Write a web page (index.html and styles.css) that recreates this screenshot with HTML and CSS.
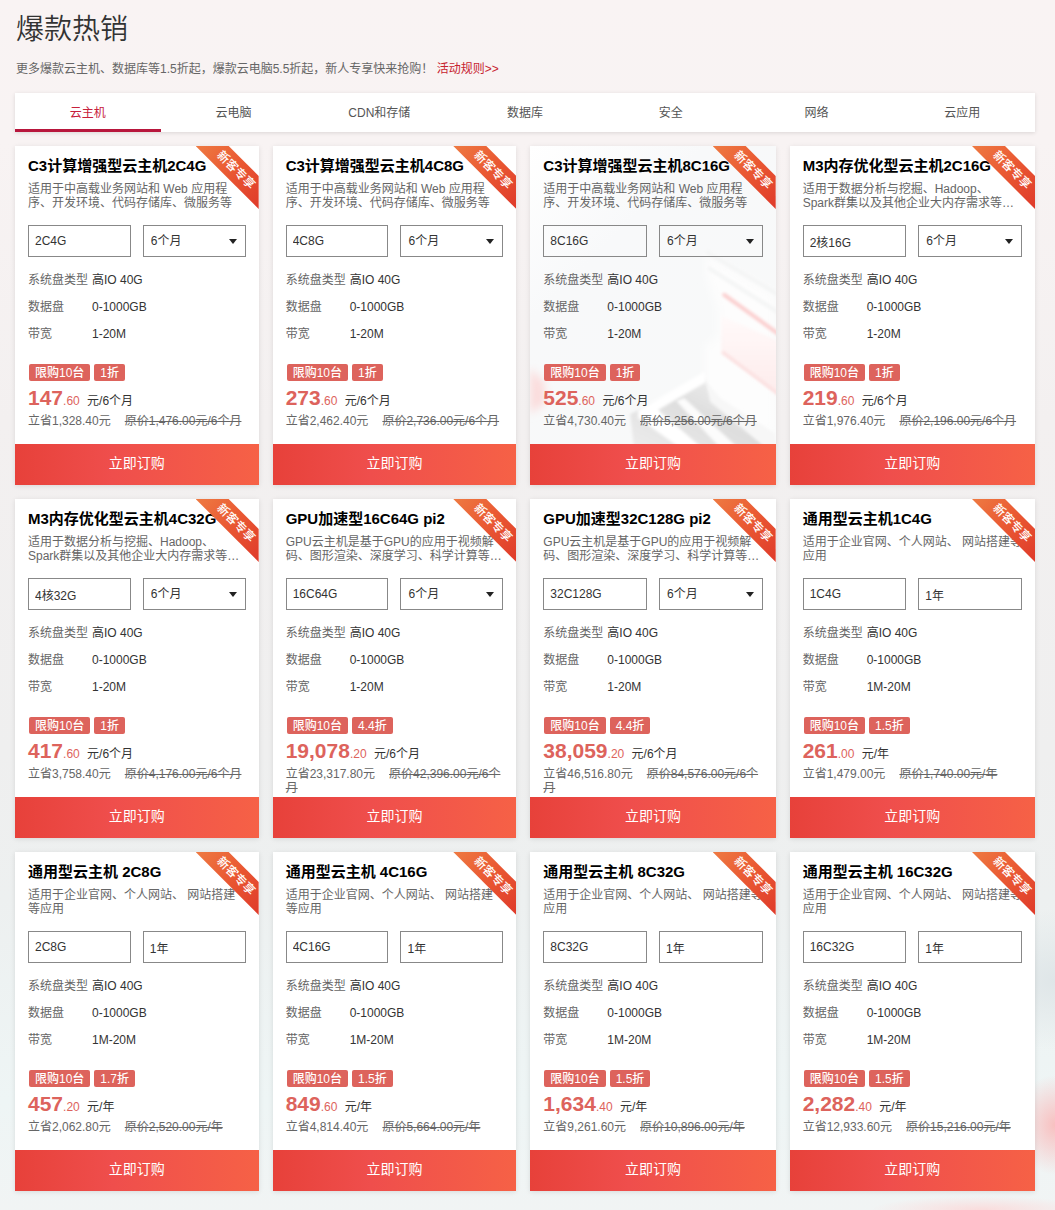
FILE: index.html
```
<!DOCTYPE html>
<html lang="zh-CN">
<head>
  <meta charset="UTF-8" />
  <title>爆款热销</title>
  <link rel="stylesheet" href="styles.css">
</head>
<body>
  <header class="page-head">
    <h1>爆款热销</h1>
    <p>更多爆款云主机、数据库等1.5折起，爆款云电脑5.5折起，新人专享快来抢购！ <a href="#rules">活动规则&gt;&gt;</a></p>
  </header>

  <nav class="tabs">
    <button class="tab active">云主机</button>
    <button class="tab">云电脑</button>
    <button class="tab">CDN和存储</button>
    <button class="tab">数据库</button>
    <button class="tab">安全</button>
    <button class="tab">网络</button>
    <button class="tab">云应用</button>
  </nav>

  <main class="cards" id="cards"></main>

  <script src="app.js"></script>
</body>
</html>
```

FILE: styles.css
```
* { box-sizing: border-box; }

body {
  margin: 0;
  padding: 9px 20px 19px 15px;
  font-family: "Liberation Sans", "Noto Sans CJK SC", sans-serif;
  font-size: 12px;
  color: #333;
  background:
    radial-gradient(ellipse 40px 50px at 100% 1125px, #f8c0c0, transparent),
    radial-gradient(ellipse 110px 14px at 93% 100%, #fadcdc, transparent),
    radial-gradient(ellipse 90px 70px at 100% 980px, #dfe6e8, transparent),
    linear-gradient(#f9f3f3 0, #f8f3f3 140px, #f3f0f0 420px, #efefef 750px, #edf0f0 900px, #eef5f5 1100px, #f1f4f4 100%);
}

button, input, select {
  font-family: inherit;
  font-size: 12px;
  color: #333;
}

.page-head {
  padding-left: 1px;
}

h1 {
  margin: 0;
  font-size: 28px;
  font-weight: 350;
  line-height: 42px;
}

.page-head p {
  margin: 8px 0 14px;
  line-height: 20px;
  color: #666;
}

.page-head a {
  color: #c7222f;
  text-decoration: none;
}

.tabs {
  display: flex;
  margin-bottom: 14px;
  background: #fff;
  box-shadow: 0 1px 4px rgba(0,0,0,0.12);
}

.tab {
  flex: 1;
  height: 39px;
  padding: 1px 0 0;
  border: none;
  border-bottom: 3px solid transparent;
  background: none;
  color: #555;
  cursor: pointer;
}

.tab.active {
  color: #c7203c;
  border-bottom-color: #b8163c;
}

.cards {
  display: grid;
  grid-template-columns: repeat(4, 1fr);
  gap: 14px;
}

.card {
  position: relative;
  background: #fff;
  box-shadow: 0 1px 5px rgba(0,0,0,0.1);
}

.card.hover {
  background: linear-gradient(135deg, #fff, #f8f9fa 30%, #f8f9f9 80%, #fafbfb);
}

.card-art {
  position: absolute;
  top: 0;
  left: 0;
  width: 100%;
  height: 298px;
}

.card-body {
  position: relative;
  padding: 9px 13px 2px;
}

.card h3 {
  margin: 0;
  font-size: 15px;
  line-height: 22px;
  color: #000;
  white-space: nowrap;
}

.desc {
  margin: 5px 0 15px;
  line-height: 14px;
  color: #666;
  white-space: pre;
}

.options {
  display: grid;
  grid-template-columns: 1fr 1fr;
  gap: 12px;
}

.options input, .options select {
  width: 100%;
  height: 32px;
  padding: 0 6px;
  border: 1px solid #888;
  border-radius: 0;
  background: transparent;
  line-height: 30px;
  appearance: none;
}

.options select {
  padding-left: 7px;
}

.select {
  position: relative;
}

.select::after {
  content: "";
  position: absolute;
  top: 14px;
  right: 9px;
  border: 4px solid transparent;
  border-top: 5px solid #222;
  border-bottom: none;
  pointer-events: none;
}

.specs {
  display: grid;
  grid-template-columns: 60px 1fr;
  column-gap: 4px;
  margin: 10px 0 16px;
  line-height: 27px;
}

.specs dt {
  color: #666;
}

.specs dd {
  margin: 0;
}

.tags {
  display: flex;
  gap: 4px;
  padding-left: 1px;
}

.tag {
  padding: 1px 6px 0;
  border-radius: 2px;
  background: #dd635c;
  color: #fff;
  font-weight: 500;
  line-height: 16px;
}

.price {
  margin: 5px 0 1px;
  line-height: 24px;
}

.price b {
  font-size: 21px;
}

.price b, .price small {
  color: #dd635c;
}

.price small {
  font-size: 12px;
  margin-right: 4px;
}

.saving {
  min-height: 28px;
  margin: 0;
  line-height: 14px;
  color: #666;
}

.saving del {
  margin-left: 14px;
}

.buy {
  display: block;
  position: relative;
  width: 100%;
  height: 41px;
  padding: 0 0 5px;
  border: none;
  background: linear-gradient(90deg, #e7413a, #ef4e4c 40%, #f66146);
  color: #fff;
  font-size: 14px;
  cursor: pointer;
}

.ribbon {
  position: absolute;
  top: 0;
  right: 0;
  width: 63px;
  height: 63px;
  clip-path: polygon(0 0, 33px 0, 100% 30px, 100% 100%);
  background: linear-gradient(135deg, #ee7a42, #ea5a33 45%, #df3a2a);
}

.ribbon span {
  position: absolute;
  top: 16px;
  left: 9px;
  width: 62px;
  color: #fff;
  font-weight: 500;
  line-height: 16px;
  text-align: center;
  transform: rotate(45deg);
}

@media (max-width: 900px) {
  .cards {
    grid-template-columns: repeat(2, 1fr);
  }
}
```

FILE: app.js
```
const web = "适用于中高载业务网站和 Web 应用程\n序、开发环境、代码存储库、微服务等";
const data = "适用于数据分析与挖掘、Hadoop、\nSpark群集以及其他企业大内存需求等…";
const gpu = "GPU云主机是基于GPU的应用于视频解\n码、图形渲染、深度学习、科学计算等…";
const site = "适用于企业官网、个人网站、 网站搭建\n等应用";
const siteWide = "适用于企业官网、个人网站、 网站搭建等\n应用";

// name, description, spec, period, bandwidth, discount, price, cents, saving, original
const products = [
  ["C3计算增强型云主机2C4G", web, "2C4G", "6个月", "1-20M", "1折", "147", ".60", "1,328.40", "1,476.00"],
  ["C3计算增强型云主机4C8G", web, "4C8G", "6个月", "1-20M", "1折", "273", ".60", "2,462.40", "2,736.00"],
  ["C3计算增强型云主机8C16G", web, "8C16G", "6个月", "1-20M", "1折", "525", ".60", "4,730.40", "5,256.00"],
  ["M3内存优化型云主机2C16G", data, "2核16G", "6个月", "1-20M", "1折", "219", ".60", "1,976.40", "2,196.00"],
  ["M3内存优化型云主机4C32G", data, "4核32G", "6个月", "1-20M", "1折", "417", ".60", "3,758.40", "4,176.00"],
  ["GPU加速型16C64G pi2", gpu, "16C64G", "6个月", "1-20M", "4.4折", "19,078", ".20", "23,317.80", "42,396.00"],
  ["GPU加速型32C128G pi2", gpu, "32C128G", "6个月", "1-20M", "4.4折", "38,059", ".20", "46,516.80", "84,576.00"],
  ["通用型云主机1C4G", siteWide, "1C4G", "1年", "1M-20M", "1.5折", "261", ".00", "1,479.00", "1,740.00"],
  ["通用型云主机 2C8G", site, "2C8G", "1年", "1M-20M", "1.7折", "457", ".20", "2,062.80", "2,520.00"],
  ["通用型云主机 4C16G", site, "4C16G", "1年", "1M-20M", "1.5折", "849", ".60", "4,814.40", "5,664.00"],
  ["通用型云主机 8C32G", siteWide, "8C32G", "1年", "1M-20M", "1.5折", "1,634", ".40", "9,261.60", "10,896.00"],
  ["通用型云主机 16C32G", siteWide, "16C32G", "1年", "1M-20M", "1.5折", "2,282", ".40", "12,933.60", "15,216.00"]
];

const hovered = 2;

// soft server drawing behind the highlighted card
const art = `
  <svg class="card-art" viewBox="0 0 245 298" preserveAspectRatio="xMaxYMax slice" aria-hidden="true">
    <defs>
      <filter id="soft"><feGaussianBlur stdDeviation="1.5" /></filter>
      <filter id="softer" x="-50%" y="-50%" width="200%" height="200%"><feGaussianBlur stdDeviation="4" /></filter>
      <linearGradient id="shade" x1="0" y1="1" x2="1" y2="0">
        <stop offset="0" stop-color="#ececec" />
        <stop offset="0.5" stop-color="#dedede" />
        <stop offset="1" stop-color="#f4f4f4" />
      </linearGradient>
      <linearGradient id="pink" x1="0" y1="0" x2="0" y2="1">
        <stop offset="0" stop-color="#fffafa" />
        <stop offset="1" stop-color="#fdebeb" />
      </linearGradient>
    </defs>
    <path d="M0 222L14 236L16 256L0 268Z" fill="#fbdcdc" filter="url(#softer)" />
    <path d="M176 108L245 148V290L200 270L174 250V200L188 190V165L176 130Z" fill="#fdfdfd" filter="url(#softer)" />
    <path d="M176 106L250 150M178 122L250 168" stroke="#f4f5f5" stroke-width="4" filter="url(#soft)" />
    <path d="M194 149L248 188" stroke="#fbcfcf" stroke-width="4" stroke-linecap="round" filter="url(#soft)" />
    <path d="M191 170L250 196V250L191 208Z" fill="url(#pink)" filter="url(#soft)" />
    <path d="M192 206L248 248" stroke="#fbdfdf" stroke-width="3" filter="url(#soft)" />
    <path d="M100 268L135 252L174 232L182 250L238 302H104Z" fill="url(#shade)" filter="url(#soft)" />
    <path d="M176 236L190 252L245 288V302H236L180 256Z" fill="#f7f7f7" filter="url(#soft)" />
    <path d="M108 264L174 226L176 236L128 264L172 302H150L108 272Z" fill="#fff" filter="url(#soft)" />
    <path d="M146 255L154 252L208 302H190Z" fill="#fcfcfc" filter="url(#soft)" />
  </svg>`;

function period(value) {
  if (value === "1年") {
    return `<input type="text" value="${value}" aria-label="时长" readonly />`;
  }
  return `
    <div class="select">
      <select aria-label="时长">
        <option>${value}</option>
      </select>
    </div>`;
}

document.getElementById("cards").innerHTML = products.map((p, index) => {
  const [name, desc, spec, time, band, off, price, cents, saving, original] = p;
  const unit = time === "1年" ? "年" : time;
  return `
    <article class="card ${index === hovered ? "hover" : ""}">
      ${index === hovered ? art : ""}
      <div class="card-body">
        <h3>${name}</h3>
        <p class="desc">${desc}</p>
        <div class="options">
          <input type="text" value="${spec}" aria-label="规格" readonly />
          ${period(time)}
        </div>
        <dl class="specs">
          <dt>系统盘类型</dt><dd>高IO 40G</dd>
          <dt>数据盘</dt><dd>0-1000GB</dd>
          <dt>带宽</dt><dd>${band}</dd>
        </dl>
        <div class="tags"><span class="tag">限购10台</span><span class="tag">${off}</span></div>
        <div class="price"><b>${price}</b><small>${cents}</small> 元/${unit}</div>
        <p class="saving">立省${saving}元<del>原价${original}元/${unit}</del></p>
      </div>
      <button class="buy">立即订购</button>
      <div class="ribbon"><span>新客专享</span></div>
    </article>`;
}).join("");
```
